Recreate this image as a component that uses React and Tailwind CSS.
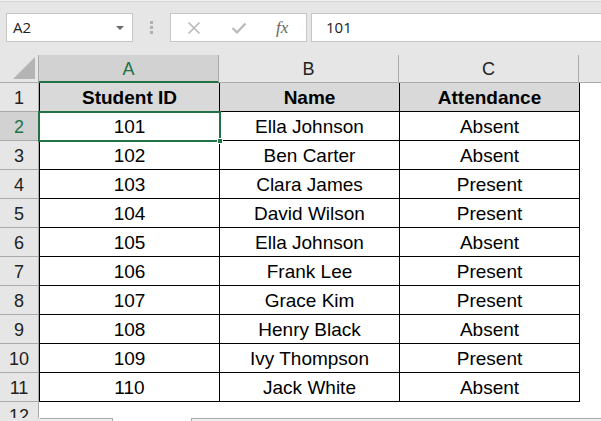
import React from "react";

const rows = [
  ["101", "Ella Johnson", "Absent"],
  ["102", "Ben Carter", "Absent"],
  ["103", "Clara James", "Present"],
  ["104", "David Wilson", "Present"],
  ["105", "Ella Johnson", "Absent"],
  ["106", "Frank Lee", "Present"],
  ["107", "Grace Kim", "Present"],
  ["108", "Henry Black", "Absent"],
  ["109", "Ivy Thompson", "Present"],
  ["110", "Jack White", "Absent"],
];

const cellFont = { fontFamily: '"Liberation Sans", Arial, sans-serif' };

function FormulaBar() {
  return (
    <div className="h-[55px] bg-[#e6e6e6]" style={{ fontFamily: '"Open Sans", "Liberation Sans", sans-serif' }}>
      <div className="h-[2px] bg-[#efefef] border-b border-[#d6d6d6]" />
      <div className="flex items-center h-[29px] mt-[11px]">
        {/* name box */}
        <div className="ml-[6px] w-[127px] h-[29px] bg-white border border-[#c6c6c6] flex items-center pl-[6px] pr-[8px] justify-between">
          <span className="text-[15px] text-[#222]">A2</span>
          <span className="w-0 h-0 border-l-[4px] border-r-[4px] border-t-[4px] border-l-transparent border-r-transparent border-t-[#6a6a6a]" />
        </div>
        {/* grip dots */}
        <div className="w-[37px] flex flex-col items-center gap-[2px]">
          <span className="w-[3px] h-[3px] bg-[#b0b0b0]" />
          <span className="w-[3px] h-[3px] bg-[#b0b0b0]" />
          <span className="w-[3px] h-[3px] bg-[#b0b0b0]" />
        </div>
        {/* buttons */}
        <div className="w-[137px] h-[29px] bg-white border border-[#c6c6c6] flex items-center">
          <svg width="14" height="14" viewBox="0 0 14 14" className="ml-[16px]">
            <path d="M1.5 1.5 L12.5 12.5 M12.5 1.5 L1.5 12.5" stroke="#b8b8b8" strokeWidth="1.6" fill="none" />
          </svg>
          <svg width="16" height="14" viewBox="0 0 16 14" className="ml-[30px]">
            <path d="M1.5 7 L6 11.5 L14.5 2.5" stroke="#b8b8b8" strokeWidth="2.2" fill="none" />
          </svg>
          <span className="ml-[29px] text-[17px] italic text-[#666]" style={{ fontFamily: '"Liberation Serif", serif' }}>
            fx
          </span>
        </div>
        {/* input */}
        <div className="ml-[4px] flex-1 h-[29px] bg-white border border-r-0 border-[#c6c6c6] flex items-center pl-[14px]">
          <span className="text-[15px] text-[#222]">101</span>
        </div>
      </div>
    </div>
  );
}

function ColumnHeaders() {
  const letter = "text-[18px] flex items-center justify-center pt-[2px]";
  return (
    <div className="flex h-[28px]" style={cellFont}>
      <div className="w-[39px] bg-[#e6e6e6] border-r border-b border-[#ababab] relative">
        <svg width="22" height="22" className="absolute right-[3px] bottom-[3px]">
          <polygon points="22,0 22,22 0,22" fill="#b4b4b4" />
        </svg>
      </div>
      <div className={`w-[180px] bg-[#d2d2d2] border-r border-[#ababab] border-b-2 border-b-[#217346] text-[#217346] ${letter}`}>A</div>
      <div className={`w-[180px] bg-[#e6e6e6] border-r border-b border-[#ababab] text-[#222] ${letter}`}>B</div>
      <div className={`w-[180px] bg-[#e6e6e6] border-r border-b border-[#ababab] text-[#222] ${letter}`}>C</div>
      <div className="flex-1 bg-[#e6e6e6] border-b border-[#ababab]" />
    </div>
  );
}

function RowHead({ n, selected }) {
  return (
    <div
      className={`w-[39px] shrink-0 border-r border-b flex items-center justify-center pt-[2px] text-[18px] ${
        selected
          ? "bg-[#d2d2d2] text-[#217346] border-r-[#217346] border-b-[#ababab]"
          : "bg-[#e6e6e6] text-[#222] border-[#ababab]"
      }`}
    >
      {n}
    </div>
  );
}

export default function App() {
  return (
    <div className="w-[601px] h-[421px] overflow-hidden bg-white">
      <FormulaBar />
      <ColumnHeaders />
      <div className="relative" style={cellFont}>
        {/* header row */}
        <div className="flex h-[29px]">
          <RowHead n="1" />
          <div className="flex border-l border-b border-black bg-[#d9d9d9] font-bold text-[19px] text-black">
            <div className="w-[180px] border-r border-black flex items-center justify-center pt-[3px]">Student ID</div>
            <div className="w-[180px] border-r border-black flex items-center justify-center pt-[3px]">Name</div>
            <div className="w-[180px] border-r border-black flex items-center justify-center pt-[3px]">Attendance</div>
          </div>
        </div>
        {rows.map((r, i) => (
          <div key={i} className="flex h-[29px]">
            <RowHead n={String(i + 2)} selected={i === 0} />
            <div className="flex border-l border-b border-black text-[19px] text-black">
              {r.map((c, j) => (
                <div key={j} className="w-[180px] border-r border-black flex items-center justify-center pt-[3px]">
                  {c}
                </div>
              ))}
            </div>
          </div>
        ))}
        <div className="flex h-[16px]">
          <div className="w-[39px] bg-[#e6e6e6] border-r border-[#ababab] flex justify-center pt-[5px] text-[18px] leading-none text-[#222] overflow-hidden">
            12
          </div>
        </div>
        {/* selection box on A2 */}
        <div className="absolute left-[38px] top-[28px] w-[183px] h-[31px] border-2 border-[#217346]" />
        <div className="absolute left-[217px] top-[55px] w-[6px] h-[6px] bg-[#217346] border border-white" />
      </div>
      {/* sheet bar */}
      <div className="flex h-[3px]">
        <div className="w-[40px] bg-[#e6e6e6]" />
        <div className="w-[73px] bg-[#f0f0f0] border-t border-r border-[#ababab]" />
        <div className="w-[78px] bg-white" />
        <div className="flex-1 bg-[#f0f0f0] border-t border-l border-[#ababab]" />
      </div>
    </div>
  );
}
